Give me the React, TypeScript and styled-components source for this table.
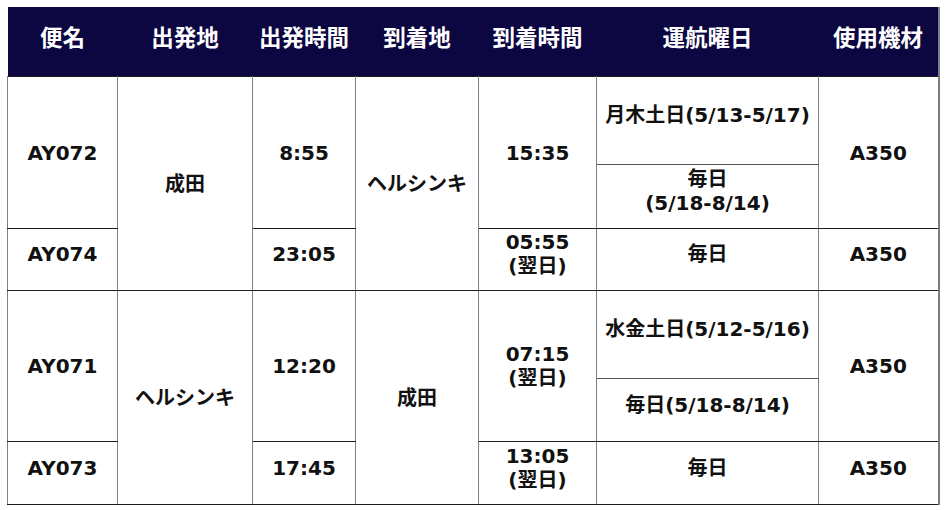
import React from "react";
import styled, { createGlobalStyle } from "styled-components";

const GlobalStyle = createGlobalStyle`
  html, body {
    margin: 0;
    padding: 0;
    background: #ffffff;
  }
  body {
    font-family: "DejaVu Sans", "Noto Sans CJK JP", sans-serif;
  }
`;

const Page = styled.div`
  padding: 7px 0 0 7px;
`;

const Table = styled.table`
  border-collapse: collapse;
  table-layout: fixed;
  width: 931px;
  font-weight: 700;
  color: #111111;
  border-right: 2px solid #7c7c86;
  border-bottom: 1px solid #1c1c1c;
`;

const HeadCell = styled.th`
  height: 57px;
  padding: 0 0 12px;
  background: #0c0641;
  color: #ffffff;
  font-size: 22.5px;
  font-weight: 700;
  text-align: center;
  vertical-align: middle;
  border: none;
`;

const Row = styled.tr<{ $h: number }>`
  height: ${(p) => p.$h}px;
`;

// cells spanning one row sit a little above the middle, spanned ones are centred
const Cell = styled.td<{ $split?: boolean }>`
  padding: 0 0 ${(p) => (p.rowSpan && p.rowSpan > 1 ? 0 : 11)}px;
  font-size: 20px;
  line-height: 24px;
  text-align: center;
  vertical-align: middle;
  border-left: 1px solid #80808a;
  border-right: 1px solid #80808a;
  border-top: 1px solid #1c1c1c;
  border-bottom: 1px solid ${(p) => (p.$split ? "#55555c" : "#1c1c1c")};
`;

const Line = styled.span`
  display: block;
`;

const widths = [110, 135, 103, 123, 118, 222, 120];
const heads = ["便名", "出発地", "出発時間", "到着地", "到着時間", "運航曜日", "使用機材"];

export default function App() {
  return (
    <Page>
      <GlobalStyle />
      <Table>
        <colgroup>
          {widths.map((w, i) => (
            <col key={i} style={{ width: w }} />
          ))}
        </colgroup>
        <thead>
          <tr>
            {heads.map((h) => (
              <HeadCell key={h}>{h}</HeadCell>
            ))}
          </tr>
        </thead>
        <tbody>
          <Row $h={88}>
            <Cell rowSpan={2}>AY072</Cell>
            <Cell rowSpan={3}>成田</Cell>
            <Cell rowSpan={2}>8:55</Cell>
            <Cell rowSpan={3}>ヘルシンキ</Cell>
            <Cell rowSpan={2}>15:35</Cell>
            <Cell $split>月木土日(5/13-5/17)</Cell>
            <Cell rowSpan={2}>A350</Cell>
          </Row>
          <Row $h={64}>
            <Cell>
              <Line>毎日</Line>
              <Line>(5/18-8/14)</Line>
            </Cell>
          </Row>
          <Row $h={62}>
            <Cell>AY074</Cell>
            <Cell>23:05</Cell>
            <Cell>
              <Line>05:55</Line>
              <Line>(翌日)</Line>
            </Cell>
            <Cell>毎日</Cell>
            <Cell>A350</Cell>
          </Row>
          <Row $h={88}>
            <Cell rowSpan={2}>AY071</Cell>
            <Cell rowSpan={3}>ヘルシンキ</Cell>
            <Cell rowSpan={2}>12:20</Cell>
            <Cell rowSpan={3}>成田</Cell>
            <Cell rowSpan={2}>
              <Line>07:15</Line>
              <Line>(翌日)</Line>
            </Cell>
            <Cell $split>水金土日(5/12-5/16)</Cell>
            <Cell rowSpan={2}>A350</Cell>
          </Row>
          <Row $h={63}>
            <Cell>毎日(5/18-8/14)</Cell>
          </Row>
          <Row $h={63}>
            <Cell>AY073</Cell>
            <Cell>17:45</Cell>
            <Cell>
              <Line>13:05</Line>
              <Line>(翌日)</Line>
            </Cell>
            <Cell>毎日</Cell>
            <Cell>A350</Cell>
          </Row>
        </tbody>
      </Table>
    </Page>
  );
}
